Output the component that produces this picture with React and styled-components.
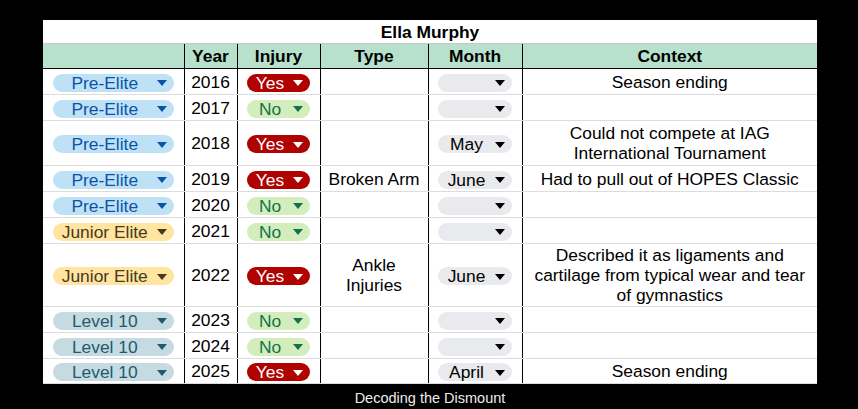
import React from "react";
import styled, { createGlobalStyle } from "styled-components";

const GlobalStyle = createGlobalStyle`
  html, body {
    margin: 0;
    padding: 0;
    background: #000;
  }
  body {
    font-family: "Liberation Sans", Arial, sans-serif;
  }
`;

const Page = styled.div`
  width: 858px;
  height: 409px;
  padding: 20px 0 0 43px;
  box-sizing: border-box;
  background: #000;
`;

const Sheet = styled.table`
  width: 774px;
  table-layout: fixed;
  border-collapse: collapse;
  background: #fff;
  font-size: 17.4px;
  color: #000;
`;

const TitleCell = styled.td`
  height: 23px;
  padding: 0;
  text-align: center;
  font-weight: bold;
  line-height: 20px;
  border-bottom: 1px solid #c8c8c8;
`;

const HeadRow = styled.tr`
  height: 25px;
  background: #b7e1cd;
`;

const HeadCell = styled.th`
  padding: 0 4px;
  font-weight: bold;
  line-height: 20px;
  text-align: center;
  border-bottom: 1px solid #000;
  border-left: ${(p) => (p.$first ? "none" : "1px solid #000")};
`;

const Row = styled.tr`
  height: ${(p) => p.$h}px;
`;

const Cell = styled.td`
  padding: 0 6px;
  line-height: 20px;
  text-align: center;
  vertical-align: middle;
  border-bottom: 1px solid #dcdcdc;
  border-left: ${(p) => (p.$first ? "none" : "1px solid #000")};
`;

const chipColors = {
  "Pre-Elite": { bg: "#bfe1f6", fg: "#0a53a8" },
  "Junior Elite": { bg: "#ffe5a0", fg: "#473821" },
  "Level 10": { bg: "#c6dbe1", fg: "#215a6c" },
  Yes: { bg: "#b10202", fg: "#ffffff" },
  No: { bg: "#d4edbc", fg: "#11734b" },
  month: { bg: "#e8eaed", fg: "#000000" },
};

const Chip = styled.span`
  display: inline-flex;
  align-items: center;
  box-sizing: border-box;
  width: ${(p) => p.$w}px;
  height: 18px;
  padding: 0 7px 0 8px;
  border-radius: 9px;
  background: ${(p) => p.$bg};
  color: ${(p) => p.$fg};
  line-height: 18px;
  white-space: nowrap;
  vertical-align: middle;
`;

const ChipLabel = styled.span`
  flex: 1;
  text-align: center;
`;

const Caret = styled.span`
  width: 0;
  height: 0;
  margin-left: 8px;
  margin-top: 1px;
  border-left: 5px solid transparent;
  border-right: 5px solid transparent;
  border-top: 6px solid currentColor;
`;

const Caption = styled.div`
  width: 774px;
  padding-top: 5px;
  text-align: center;
  color: #ececec;
  font-size: 14.5px;
  line-height: 18px;
`;

const Pill = ({ label, kind, w }) => {
  const c = chipColors[kind || label];
  return (
    <Chip $w={w} $bg={c.bg} $fg={c.fg}>
      <ChipLabel>{label}</ChipLabel>
      <Caret />
    </Chip>
  );
};

const rows = [
  { level: "Pre-Elite", year: 2016, injury: "Yes", type: "", month: "", context: "Season ending", h: 26 },
  { level: "Pre-Elite", year: 2017, injury: "No", type: "", month: "", context: "", h: 26 },
  { level: "Pre-Elite", year: 2018, injury: "Yes", type: "", month: "May", context: "Could not compete at IAG International Tournament", h: 45 },
  { level: "Pre-Elite", year: 2019, injury: "Yes", type: "Broken Arm", month: "June", context: "Had to pull out of HOPES Classic", h: 26 },
  { level: "Pre-Elite", year: 2020, injury: "No", type: "", month: "", context: "", h: 26 },
  { level: "Junior Elite", year: 2021, injury: "No", type: "", month: "", context: "", h: 26 },
  { level: "Junior Elite", year: 2022, injury: "Yes", type: "Ankle Injuries", month: "June", context: "Described it as ligaments and cartilage from typical wear and tear of gymnastics", h: 63 },
  { level: "Level 10", year: 2023, injury: "No", type: "", month: "", context: "", h: 26 },
  { level: "Level 10", year: 2024, injury: "No", type: "", month: "", context: "", h: 26 },
  { level: "Level 10", year: 2025, injury: "Yes", type: "", month: "April", context: "Season ending", h: 25 },
];

export default function App() {
  return (
    <Page>
      <GlobalStyle />
      <Sheet>
        <colgroup>
          <col style={{ width: 141 }} />
          <col style={{ width: 53 }} />
          <col style={{ width: 83 }} />
          <col style={{ width: 108 }} />
          <col style={{ width: 94 }} />
          <col style={{ width: 295 }} />
        </colgroup>
        <tbody>
          <tr>
            <TitleCell colSpan={6}>Ella Murphy</TitleCell>
          </tr>
          <HeadRow>
            <HeadCell $first />
            <HeadCell>Year</HeadCell>
            <HeadCell>Injury</HeadCell>
            <HeadCell>Type</HeadCell>
            <HeadCell>Month</HeadCell>
            <HeadCell>Context</HeadCell>
          </HeadRow>
          {rows.map((r) => (
            <Row key={r.year} $h={r.h}>
              <Cell $first>
                <Pill label={r.level} w={121} />
              </Cell>
              <Cell>{r.year}</Cell>
              <Cell>
                <Pill label={r.injury} w={63} />
              </Cell>
              <Cell>{r.type}</Cell>
              <Cell>
                <Pill label={r.month} kind="month" w={74} />
              </Cell>
              <Cell>{r.context}</Cell>
            </Row>
          ))}
        </tbody>
      </Sheet>
      <Caption>Decoding the Dismount</Caption>
    </Page>
  );
}
